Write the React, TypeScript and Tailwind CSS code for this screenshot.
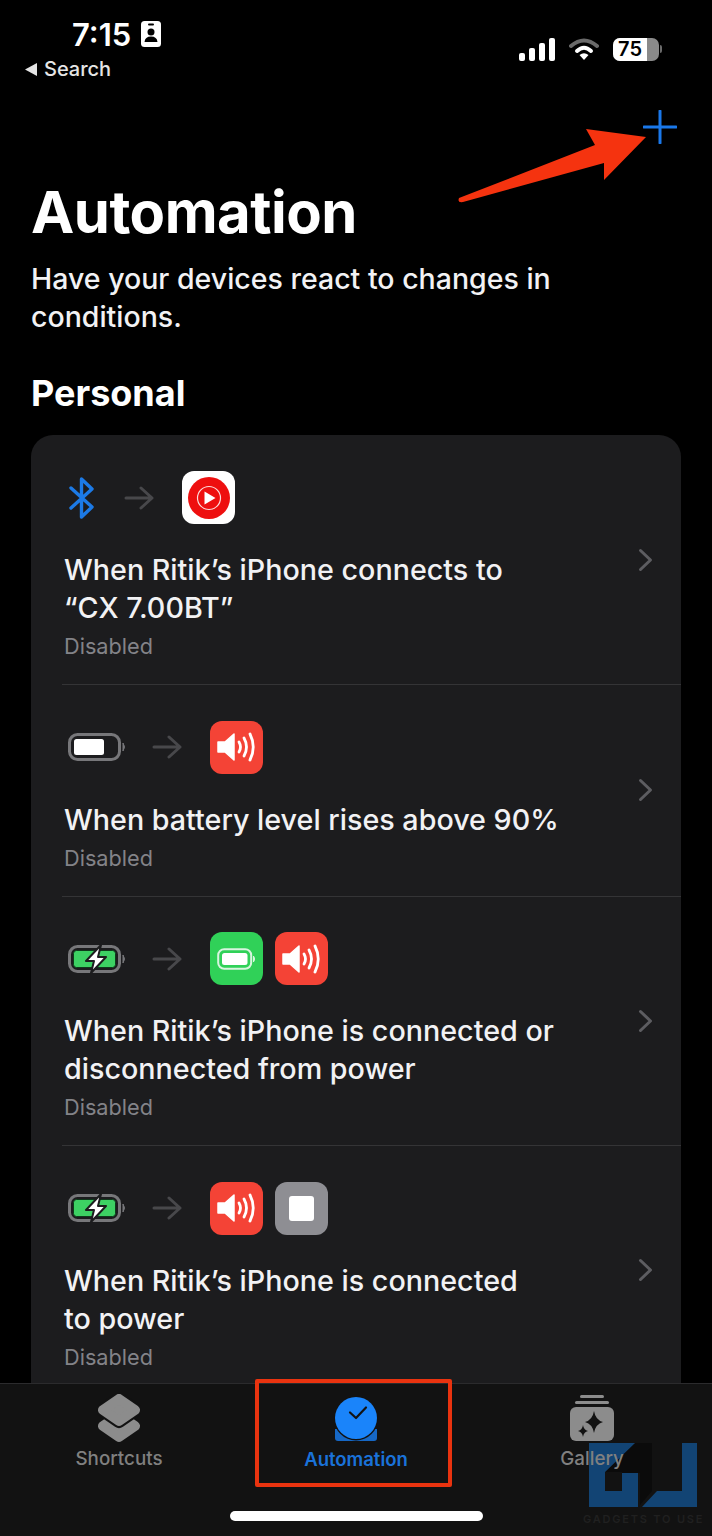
const FONT = "font-['Inter','Liberation_Sans',sans-serif]";

function Bluetooth() {
  return (
    <svg width="28" height="42" viewBox="0 0 28 42" fill="none" stroke="#1c7ae6" strokeWidth="3.4" strokeLinecap="round" strokeLinejoin="round" className="mr-[1px]">
      <path d="M3 11 L24 30 L13.5 40 V2 L24 12 L3 31" />
    </svg>
  );
}

function Arrow() {
  return (
    <svg width="30" height="24" viewBox="0 0 30 24" fill="none" stroke="#48484b" strokeWidth="3" strokeLinecap="round" strokeLinejoin="round">
      <path d="M2 12 H28 M17 2 L28 12 L17 22" />
    </svg>
  );
}

function Tile({ className, children }: { className: string; children: React.ReactNode }) {
  return (
    <div className={`w-[53px] h-[53px] rounded-[12px] flex items-center justify-center ${className}`}>
      {children}
    </div>
  );
}

function YouTubeMusic() {
  return (
    <Tile className="bg-white">
      <svg width="42" height="42" viewBox="0 0 42 42">
        <circle cx="21" cy="21" r="21" fill="#ee0f0f" />
        <circle cx="21" cy="21" r="11.5" fill="none" stroke="#fff" strokeWidth="1.2" opacity="0.85" />
        <path d="M16.5 14.5 L27.5 21 L16.5 27.5 Z" fill="#fff" />
      </svg>
    </Tile>
  );
}

function Sound() {
  return (
    <Tile className="bg-[#f44336]">
      <svg width="40" height="32" viewBox="0 0 40 32" fill="none">
        <path d="M1 11 H8 L17 3 V29 L8 21 H1 Z" fill="#fff" stroke="#fff" strokeWidth="1.5" strokeLinejoin="round" />
        <g stroke="#fff" strokeWidth="2.8" strokeLinecap="round">
          <path d="M22 11 Q25 16 22 21" />
          <path d="M27 7 Q32 16 27 25" />
          <path d="M33 3 Q39.5 16 33 29" />
        </g>
      </svg>
    </Tile>
  );
}

function BatteryTile() {
  return (
    <Tile className="bg-[#30d158]">
      <svg width="40" height="22" viewBox="0 0 40 22" fill="none">
        <rect x="1.2" y="1.2" width="33" height="19.6" rx="6" stroke="#d8f5df" strokeWidth="2" />
        <rect x="5" y="5" width="25.5" height="12" rx="2.5" fill="#fff" />
        <path d="M36.5 8 Q38.8 11 36.5 14 Z" fill="#d8f5df" stroke="#d8f5df" />
      </svg>
    </Tile>
  );
}

function StopTile() {
  return (
    <Tile className="bg-[#8e8e93]">
      <div className="w-[25px] h-[25px] rounded-[3px] bg-white" />
    </Tile>
  );
}

function BatteryFull() {
  return (
    <svg width="59" height="28" viewBox="0 0 59 28" fill="none" className="-mr-[2px]">
      <rect x="1.5" y="1.5" width="50" height="25" rx="8" stroke="#77777a" strokeWidth="3" />
      <rect x="6" y="6" width="30" height="16" rx="2.5" fill="#fff" />
      <path d="M55 10 Q58 14 55 18 Z" fill="#77777a" stroke="#77777a" />
    </svg>
  );
}

function BatteryCharging() {
  return (
    <svg width="59" height="30" viewBox="0 0 59 30" fill="none" className="-mr-[2px]">
      <rect x="1.5" y="2.5" width="50" height="25" rx="8" stroke="#77777a" strokeWidth="3" />
      <rect x="5.5" y="6.5" width="42" height="17" rx="3" fill="#3dd163" stroke="#0f3a1c" strokeWidth="1" />
      <path d="M55 11 Q58 15 55 19 Z" fill="#77777a" stroke="#77777a" />
      <path d="M33 1 L18 17 H26 L23 29 L38 13 H30 Z" fill="#fff" stroke="#1c1c1e" strokeWidth="2" strokeLinejoin="round" />
    </svg>
  );
}

function Chevron() {
  return (
    <svg width="15" height="24" viewBox="0 0 15 24" fill="none" stroke="#5d5d61" strokeWidth="3" strokeLinecap="round" strokeLinejoin="round">
      <path d="M2.5 2.5 L12.5 12 L2.5 21.5" />
    </svg>
  );
}

type Row = {
  trigger: React.ReactNode;
  actions: React.ReactNode[];
  title: string[];
};

const ROWS: Row[] = [
  {
    trigger: <Bluetooth />,
    actions: [<YouTubeMusic key="yt" />],
    title: ["When Ritik’s iPhone connects to", "“CX 7.00BT”"],
  },
  {
    trigger: <BatteryFull />,
    actions: [<Sound key="s" />],
    title: ["When battery level rises above 90%"],
  },
  {
    trigger: <BatteryCharging />,
    actions: [<BatteryTile key="b" />, <Sound key="s" />],
    title: ["When Ritik’s iPhone is connected or", "disconnected from power"],
  },
  {
    trigger: <BatteryCharging />,
    actions: [<Sound key="s" />, <StopTile key="st" />],
    title: ["When Ritik’s iPhone is connected", "to power"],
  },
];

function AutomationRow({ row, last }: { row: Row; last: boolean }) {
  return (
    <div className="ml-[31px]">
      <div className="flex items-center justify-between pl-[2px] pr-[28px]">
        <div className="pt-[36px] pb-[19px]">
          <div className="flex items-center h-[53px] pl-[4px] gap-[27px]">
            {row.trigger}
            <Arrow />
            <div className="flex gap-[12px] ml-[1px]">{row.actions}</div>
          </div>
          <div className="mt-[27px] text-[28.7px] leading-[38px] font-medium text-[#f2f2f4]">
            {row.title.map((line) => (
              <div key={line} className="whitespace-nowrap">{line}</div>
            ))}
          </div>
          <div className="text-[21.7px] leading-[38px] text-[#838388]">Disabled</div>
        </div>
        <Chevron />
      </div>
      {!last && <div className="h-[0.5px] bg-[#343436]" />}
    </div>
  );
}

function StatusBar() {
  return (
    <div className="flex justify-between h-[88px] shrink-0">
      <div className="pl-[25px] pt-[14px]">
        <div className="flex items-center pl-[47px] h-[40px] gap-[10px]">
          <span className="text-[31px] font-semibold text-white leading-none">7:15</span>
          <svg width="20" height="26" viewBox="0 0 20 26">
            <rect width="20" height="26" rx="3.5" fill="#fff" />
            <rect x="7" y="2.5" width="6" height="2" rx="1" fill="#000" />
            <circle cx="10" cy="11" r="3.5" fill="#000" />
            <path d="M3.5 21 Q4 15.5 10 15.5 Q16 15.5 16.5 21 Z" fill="#000" />
          </svg>
        </div>
        <div className="flex items-center gap-[7px] h-[30px]">
          <svg width="12" height="13" viewBox="0 0 12 13"><path d="M12 0 V13 L0 6.5 Z" fill="#e5e5e5" /></svg>
          <span className="text-[20px] leading-none font-medium text-[#e5e5e5]">Search</span>
        </div>
      </div>
      <div className="flex items-center gap-[14px] pr-[50px] pt-[10px] h-[88px]">
        <svg width="36" height="23" viewBox="0 0 36 23" fill="#fff">
          <rect x="0" y="15" width="6" height="8" rx="2" />
          <rect x="10" y="10" width="6" height="13" rx="2" />
          <rect x="20" y="5" width="6" height="18" rx="2" />
          <rect x="30" y="0" width="6" height="23" rx="2" />
        </svg>
        <svg width="30" height="23" viewBox="0 0 30 23" fill="none" strokeLinecap="round">
          <path d="M2 8 Q15 -3 28 8" stroke="#6a6a6a" strokeWidth="4" />
          <path d="M8 13 Q15 6.5 22 13" stroke="#fff" strokeWidth="4" />
          <path d="M15 22 L10.5 17 Q15 13.5 19.5 17 Z" fill="#fff" />
        </svg>
        <div className="flex items-center">
          <div className="relative w-[46px] h-[23px] rounded-[7px] bg-[#8a8a8a] overflow-hidden">
            <div className="w-[34px] h-[23px] bg-white flex items-center justify-center">
              <span className="text-[20px] font-semibold text-black leading-none">75</span>
            </div>
          </div>
          <div className="w-[2px] h-[8px] ml-[1px] rounded-r-full bg-[#6a6a6a]" />
        </div>
      </div>
    </div>
  );
}

function TabBar() {
  return (
    <div className="h-[153px] shrink-0 bg-[#121212] border-t border-[#2b2b2d] relative">
      {/* site watermark, the tab label shows through it */}
      <svg className="absolute left-[589px] top-[59px]" width="108" height="64" viewBox="0 0 108 64">
        <path d="M46 0 H63 V48 L51 62 V30 H33 V29 H16 Z" fill="#0b0b0b" />
        <path d="M0 0 H46 L16 29 V48 H33 V30 H49 V64 H0 Z" fill="#134a80" opacity="0.9" />
        <path d="M53 64 L68 48 H93 V0 H108 V64 Z" fill="#134a80" opacity="0.9" />
      </svg>
      <span className="absolute left-[583px] top-[127px] text-[11px] tracking-[1.8px] font-semibold text-[#202020] whitespace-nowrap">GADGETS TO USE</span>

      <div className="relative grid grid-cols-[238px_236px_236px] h-[110px]">
        <div className="flex flex-col items-center pt-[10px]">
          <svg width="44" height="49" viewBox="0 0 44 49">
            <path d="M22 21 L38 32 L22 43 L6 32 Z" fill="#8c8c8c" stroke="#8c8c8c" strokeWidth="10" strokeLinejoin="round" />
            <path d="M22 5 L38 16 L22 27 L6 16 Z" fill="#121212" stroke="#121212" strokeWidth="14" strokeLinejoin="round" />
            <path d="M22 5 L38 16 L22 27 L6 16 Z" fill="#8c8c8c" stroke="#8c8c8c" strokeWidth="10" strokeLinejoin="round" />
          </svg>
          <span className="mt-[4px] text-[18.8px] leading-[24px] font-medium text-[#808080]">Shortcuts</span>
        </div>
        <div className="flex flex-col items-center pt-[13px]">
          <svg width="44" height="45" viewBox="0 0 44 45">
            <path d="M1 32 V41 Q1 44 4 44 H40 Q43 44 43 41 V32 Z" fill="#1668c6" />
            <circle cx="22" cy="21.5" r="22" fill="#121212" />
            <circle cx="22" cy="21" r="21" fill="#1a84fa" />
            <path d="M16 15.5 L22 21 L32 10.5" fill="none" stroke="#121212" strokeWidth="2.2" strokeLinecap="round" strokeLinejoin="round" />
          </svg>
          <span className="mt-[5px] text-[18.5px] leading-[24px] font-semibold text-[#1a72d9]">Automation</span>
        </div>
        <div className="flex flex-col items-center pt-[11px]">
          <svg width="44" height="46" viewBox="0 0 44 46" fill="#8c8c8c">
            <rect x="10" y="0" width="24" height="3" rx="1.5" />
            <rect x="5" y="6" width="34" height="3" rx="1.5" />
            <rect x="0" y="12" width="44" height="34" rx="6" />
            <path d="M24 16 Q25.5 25 33 27 Q25.5 29 24 38 Q22.5 29 15 27 Q22.5 25 24 16 Z" fill="#121212" />
            <path d="M13 30 Q13.7 35 18 36 Q13.7 37 13 42 Q12.3 37 8 36 Q12.3 35 13 30 Z" fill="#121212" />
          </svg>
          <span className="mt-[6px] text-[18.8px] leading-[24px] font-medium text-[#808080]">Gallery</span>
        </div>
      </div>
      <div className="absolute left-[230px] top-[127px] w-[253px] h-[10px] rounded-full bg-white" />
    </div>
  );
}

export default function App() {
  return (
    <div className={`relative w-[712px] h-[1536px] bg-black overflow-hidden flex flex-col antialiased ${FONT}`}>
      <StatusBar />
      <div className="flex-1 min-h-0 overflow-hidden px-[31px]">
        <div className="flex justify-end h-[56px]">
          <svg width="34" height="34" viewBox="0 0 34 34" className="mt-[22px] mr-[4px]" stroke="#1a78ea" strokeWidth="3" strokeLinecap="round">
            <path d="M17 1 V33 M1 17 H33" />
          </svg>
        </div>
        <h1 className="mt-[32px] text-[58px] leading-[72px] font-bold text-white tracking-[-0.5px]">Automation</h1>
        <p className="mt-[12px] text-[28.5px] leading-[38px] font-medium text-[#f2f2f4]">
          Have your devices react to changes in
          <br />
          conditions.
        </p>
        <h2 className="mt-[35px] text-[36px] leading-[44px] font-bold text-white">Personal</h2>
        <div className="mt-[20px] bg-[#1c1c1e] rounded-t-[22px] pb-[40px]">
          {ROWS.map((row, i) => (
            <AutomationRow key={i} row={row} last={i === ROWS.length - 1} />
          ))}
        </div>
      </div>
      <TabBar />

      {/* annotations sitting on top of the screenshot */}
      <svg className="absolute left-0 top-0 pointer-events-none" width="712" height="220" viewBox="0 0 712 220">
        <path d="M459 198 L595 145 L586 129 L646 137 L604 180 L604 163 L463 202 Q457 203 459 198 Z" fill="#f5330f" />
      </svg>
      <div className="absolute left-[255px] top-[1379px] w-[197px] h-[108px] border-[4px] border-[#e9330f] rounded-[2px]" />
    </div>
  );
}
